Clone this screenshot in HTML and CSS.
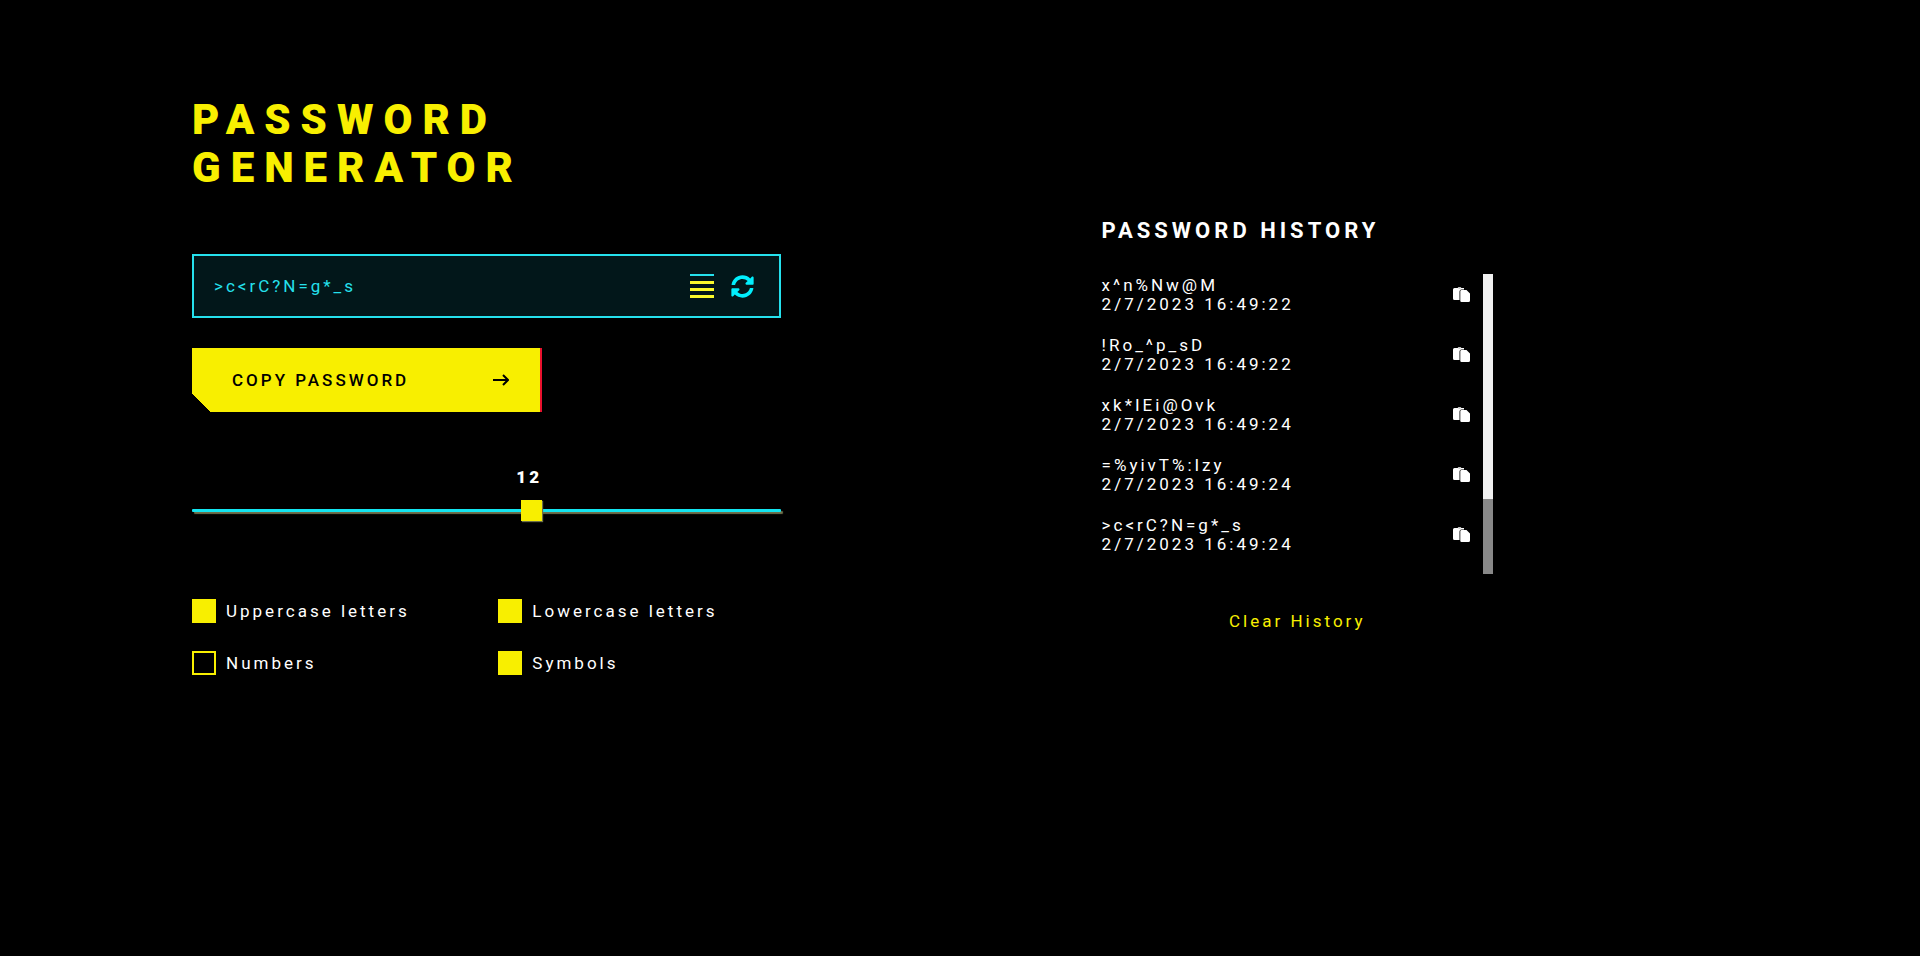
FILE: index.html
```html
<!DOCTYPE html>
<html lang="en">
<head>
<meta charset="utf-8">
<title>Password Generator</title>
<link rel="stylesheet" href="styles.css">
</head>
<body>
<svg class="sprite" aria-hidden="true">
  <symbol id="paste" viewBox="0 0 17 17">
    <path d="M1.500 2h3.100a2 1.600 0 0 1 3.800 0h2.600v1.500h-2.500q-2 0-2 2v8.500h-5q-1.500 0-1.500-1.500v-9q0-1.500 1.500-1.500z"/>
    <path d="M8.500 4h5l3.500 3.500v7q0 1.500-1.500 1.500h-7q-1.200 0-1.200-1.200v-9.600q0-1.200 1.200-1.200z"/>
    <path class="clip" d="M5.500 1.500h2v1h-2z"/>
  </symbol>
</svg>
<main class="layout">
  <section class="generator">
    <h1 class="title">PASSWORD<br>GENERATOR</h1>
    <div class="field">
      <input class="field-input" type="text" value="&gt;c&lt;rC?N=g*_s" aria-label="Password" readonly>
      <button class="icon-button menu" type="button" aria-label="Toggle history"><span class="bar thin"></span><span class="bar"></span><span class="bar"></span><span class="bar"></span></button>
      <button class="icon-button" type="button" aria-label="Refresh password">
        <svg class="refresh" viewBox="0 0 512 512"><path d="M370.720 133.280C339.458 104.008 298.888 87.962 255.848 88c-77.458.068-144.328 53.178-162.791 126.850-1.344 5.363-6.122 9.150-11.651 9.150H24.103c-7.498 0-13.194-6.807-11.807-14.176C33.933 94.924 134.813 8 256 8c66.448 0 126.791 26.136 171.315 68.685L463.030 40.970C478.149 25.851 504 36.559 504 57.941V192c0 13.255-10.745 24-24 24H345.941c-21.382 0-32.090-25.851-16.971-40.971l41.750-41.749zM32 296h134.059c21.382 0 32.090 25.851 16.971 40.971l-41.750 41.750c31.262 29.273 71.835 45.319 114.876 45.280 77.418-.070 144.315-53.144 162.787-126.849 1.344-5.363 6.122-9.150 11.651-9.150h57.304c7.498 0 13.194 6.807 11.807 14.176C478.067 417.076 377.187 504 256 504c-66.448 0-126.791-26.136-171.315-68.685L48.970 471.030C33.851 486.149 8 475.441 8 454.059V320c0-13.255 10.745-24 24-24z"/></svg>
      </button>
    </div>
    <button class="copy" type="button">COPY PASSWORD
      <svg class="arrow" viewBox="0 0 16 12"><path d="M0 6h15M10 1l5 5-5 5"/></svg>
    </button>
    <div class="length">
      <label class="length-value" for="length">12</label>
      <input class="slider" id="length" type="range" min="1" max="20" value="12">
    </div>
    <div class="options">
      <label class="option"><input class="check" type="checkbox" checked>Uppercase letters</label>
      <label class="option"><input class="check" type="checkbox" checked>Lowercase letters</label>
      <label class="option"><input class="check" type="checkbox">Numbers</label>
      <label class="option"><input class="check" type="checkbox" checked>Symbols</label>
    </div>
  </section>
  <section class="history">
    <h2 class="history-title">PASSWORD HISTORY</h2>
    <div class="history-body">
      <ul class="list">
        <li class="entry"><div>x^n%Nw@M<br>2/7/2023 16:49:22</div><button class="icon-button" type="button" aria-label="Copy"><svg class="paste"><use href="#paste"/></svg></button></li>
        <li class="entry"><div>!Ro_^p_sD<br>2/7/2023 16:49:22</div><button class="icon-button" type="button" aria-label="Copy"><svg class="paste"><use href="#paste"/></svg></button></li>
        <li class="entry"><div>xk*IEi@Ovk<br>2/7/2023 16:49:24</div><button class="icon-button" type="button" aria-label="Copy"><svg class="paste"><use href="#paste"/></svg></button></li>
        <li class="entry"><div>=%yivT%:Izy<br>2/7/2023 16:49:24</div><button class="icon-button" type="button" aria-label="Copy"><svg class="paste"><use href="#paste"/></svg></button></li>
        <li class="entry"><div>&gt;c&lt;rC?N=g*_s<br>2/7/2023 16:49:24</div><button class="icon-button" type="button" aria-label="Copy"><svg class="paste"><use href="#paste"/></svg></button></li>
      </ul>
      <div class="scroll-track"><div class="scroll-thumb"></div></div>
    </div>
    <button class="clear" type="button">Clear History</button>
  </section>
</main>
</body>
</html>
```
FILE: styles.css
```css
* { box-sizing: border-box; }
body {
  margin: 0;
  background: #000;
  color: #fff;
  font: 17px/19px Roboto, "Noto Sans", sans-serif;
  letter-spacing: 3px;
}
button, input { font: inherit; letter-spacing: inherit; color: inherit; }
.sprite { display: none; }
.clip { fill: #999; }
.layout {
  display: grid;
  grid-template-columns: 588fr 391fr;
  column-gap: 321px;
  padding: 96px 427px 0 10%;
}
.title {
  margin: 0 0 62px;
  color: #f8ef00;
  font-size: 42px;
  line-height: 48px;
  font-weight: 900;
  letter-spacing: 10px;
}
.field {
  display: flex;
  align-items: center;
  gap: 17px;
  height: 64px;
  padding: 0 25px 0 20px;
  border: 2px solid #25e1ed;
  background: #02171a;
}
.field-input {
  flex: 1;
  min-width: 0;
  padding: 0;
  border: 0;
  background: none;
  color: #25e1ed;
  outline: 0;
}
.icon-button { padding: 0; border: 0; background: none; display: block; }
.menu { display: grid; gap: 4px; width: 24px; }
.bar { height: 3px; background: #f9f92b; }
.thin { height: 2px; margin-bottom: 1px; background: #25e1ed; }
.refresh { display: block; width: 23px; height: 23px; fill: #02eefc; }
.copy {
  display: flex;
  align-items: center;
  justify-content: space-between;
  width: 350px;
  height: 64px;
  margin-top: 30px;
  padding: 0 31px 0 40px;
  border: 0;
  border-right: 2px solid #e8112d;
  background: linear-gradient(45deg, #000 13px, #f8ef00 13px);
  color: #000;
  font-weight: 500;
}
.arrow { width: 16px; height: 12px; fill: none; stroke: #000; stroke-width: 2; }
.length { padding: 56px 0 78px; }
.length-value {
  display: block;
  margin-left: 55%;
  width: 27px;
  text-align: center;
  font-weight: 900;
  letter-spacing: 3px;
}
.slider {
  display: block;
  width: 100%;
  height: 21px;
  margin: 13px 0 0;
  appearance: none;
  background: none;
}
.slider::-webkit-slider-runnable-track {
  height: 3px;
  border-radius: 1px;
  background: #13e5f0;
  box-shadow: 2px 2px 1px #6e704b;
}
.slider::-webkit-slider-thumb {
  appearance: none;
  width: 21px;
  height: 21px;
  margin-top: -9px;
  background: #f8ef00;
  box-shadow: 1px 1px 1px #6e704b;
}
.options { display: grid; grid-template-columns: 1fr 1fr; gap: 28px 24px; }
.option { display: flex; align-items: center; gap: 10px; }
.check {
  appearance: none;
  width: 24px;
  height: 24px;
  margin: 0;
  border: 2px solid #f8ef00;
}
.check:checked { background: #f8ef00; }
.history { padding-top: 123px; }
.history-title { margin: 0 0 31px; font-size: 22px; line-height: 24px; font-weight: 700; letter-spacing: 4px; }
.history-body { display: flex; }
.list { flex: 1; margin: 0; padding: 0; list-style: none; }
.scroll-track { width: 10px; background: #888; }
.scroll-thumb { height: 75%; background: #f1f1f1; }
.entry {
  display: flex;
  align-items: flex-start;
  justify-content: space-between;
  height: 60px;
  padding: 2px 13px 0 0;
}
.entry .icon-button { padding-top: 10px; }
.paste { display: block; width: 17px; height: 17px; fill: #fff; }
.clear {
  display: block;
  margin: 38px auto 0;
  padding: 0;
  border: 0;
  background: none;
  color: #f8ef00;
}
```
